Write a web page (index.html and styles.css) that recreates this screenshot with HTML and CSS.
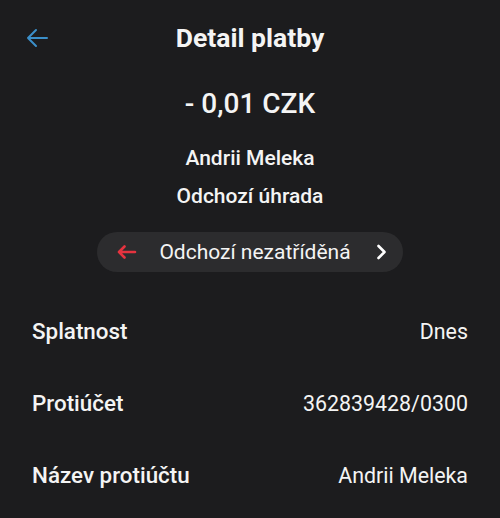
FILE: index.html
```html
<!DOCTYPE html>
<html lang="cs">
<head>
    <meta charset="UTF-8">
    <meta name="viewport" content="width=device-width, initial-scale=1.0">
    <title>Detail platby</title>
    <link rel="stylesheet" href="styles.css">
</head>
<body>
    <header class="topbar">
        <a class="back" href="#" aria-label="Zpět">
            <svg width="22" height="20" viewBox="0 0 22 20" fill="none" stroke="#3b8fc9" stroke-width="2" stroke-linecap="round" stroke-linejoin="round">
                <path d="M2 10H21M10 2L2 10L10 18"/>
            </svg>
        </a>
        <h1 class="title">Detail platby</h1>
        <span></span>
    </header>

    <section class="summary">
        <div class="amount">- 0,01 CZK</div>
        <div class="party">Andrii Meleka</div>
        <div class="party">Odchozí úhrada</div>
        <button class="category">
            <svg class="cat-arrow" width="20" height="14" viewBox="0 0 20 14" fill="none" stroke="#e5333f" stroke-width="2.6" stroke-linecap="round" stroke-linejoin="round">
                <path d="M2 7H18M7.5 1.5L2 7L7.5 12.5"/>
            </svg>
            <span class="cat-name">Odchozí nezatříděná</span>
            <svg class="chevron" width="11" height="16" viewBox="0 0 11 16" fill="none" stroke="#ffffff" stroke-width="2.6" stroke-linecap="round" stroke-linejoin="round">
                <path d="M2.5 2L8.5 8L2.5 14"/>
            </svg>
        </button>
    </section>

    <dl class="details">
        <div class="row">
            <dt>Splatnost</dt>
            <dd>Dnes</dd>
        </div>
        <div class="row">
            <dt>Protiúčet</dt>
            <dd>362839428/0300</dd>
        </div>
        <div class="row">
            <dt>Název protiúčtu</dt>
            <dd>Andrii Meleka</dd>
        </div>
    </dl>
</body>
</html>
```

FILE: styles.css
```css
body {
    margin: 0;
    background-color: #1c1c1e;
    color: #f4f4f4;
    font-family: Roboto, "Noto Sans", sans-serif;
}

.topbar {
    display: grid;
    grid-template-columns: 1fr auto 1fr;
    align-items: center;
    height: 48px;
    padding: 14px 26px 0;
}

.back {
    display: flex;
    width: 22px;
    height: 20px;
}

.title {
    margin: 0;
    font-size: 26.5px;
    font-weight: 700;
    line-height: 48px;
}

.summary {
    display: flex;
    flex-direction: column;
    align-items: center;
    margin-top: 24px;
}

.amount {
    font-size: 28px;
    font-weight: 500;
    line-height: 36px;
    margin-bottom: 17px;
}

.party {
    font-size: 21px;
    font-weight: 500;
    line-height: 38px;
}

.category {
    display: inline-flex;
    align-items: center;
    height: 40px;
    margin-top: 17px;
    padding: 0 16px 0 20px;
    border: none;
    border-radius: 20px;
    background-color: #2c2c2e;
    color: #f4f4f4;
    font-family: inherit;
}

.cat-name {
    margin: 0 25px 0 22px;
    font-size: 21px;
    font-weight: 400;
}

.details {
    margin: 23px 0 0;
    padding: 0 32px;
}

.row {
    display: flex;
    justify-content: space-between;
    align-items: center;
    height: 72px;
}

.row dt {
    font-size: 22.4px;
    font-weight: 500;
}

.row dd {
    margin: 0;
    font-size: 21.4px;
    font-weight: 400;
}
```
